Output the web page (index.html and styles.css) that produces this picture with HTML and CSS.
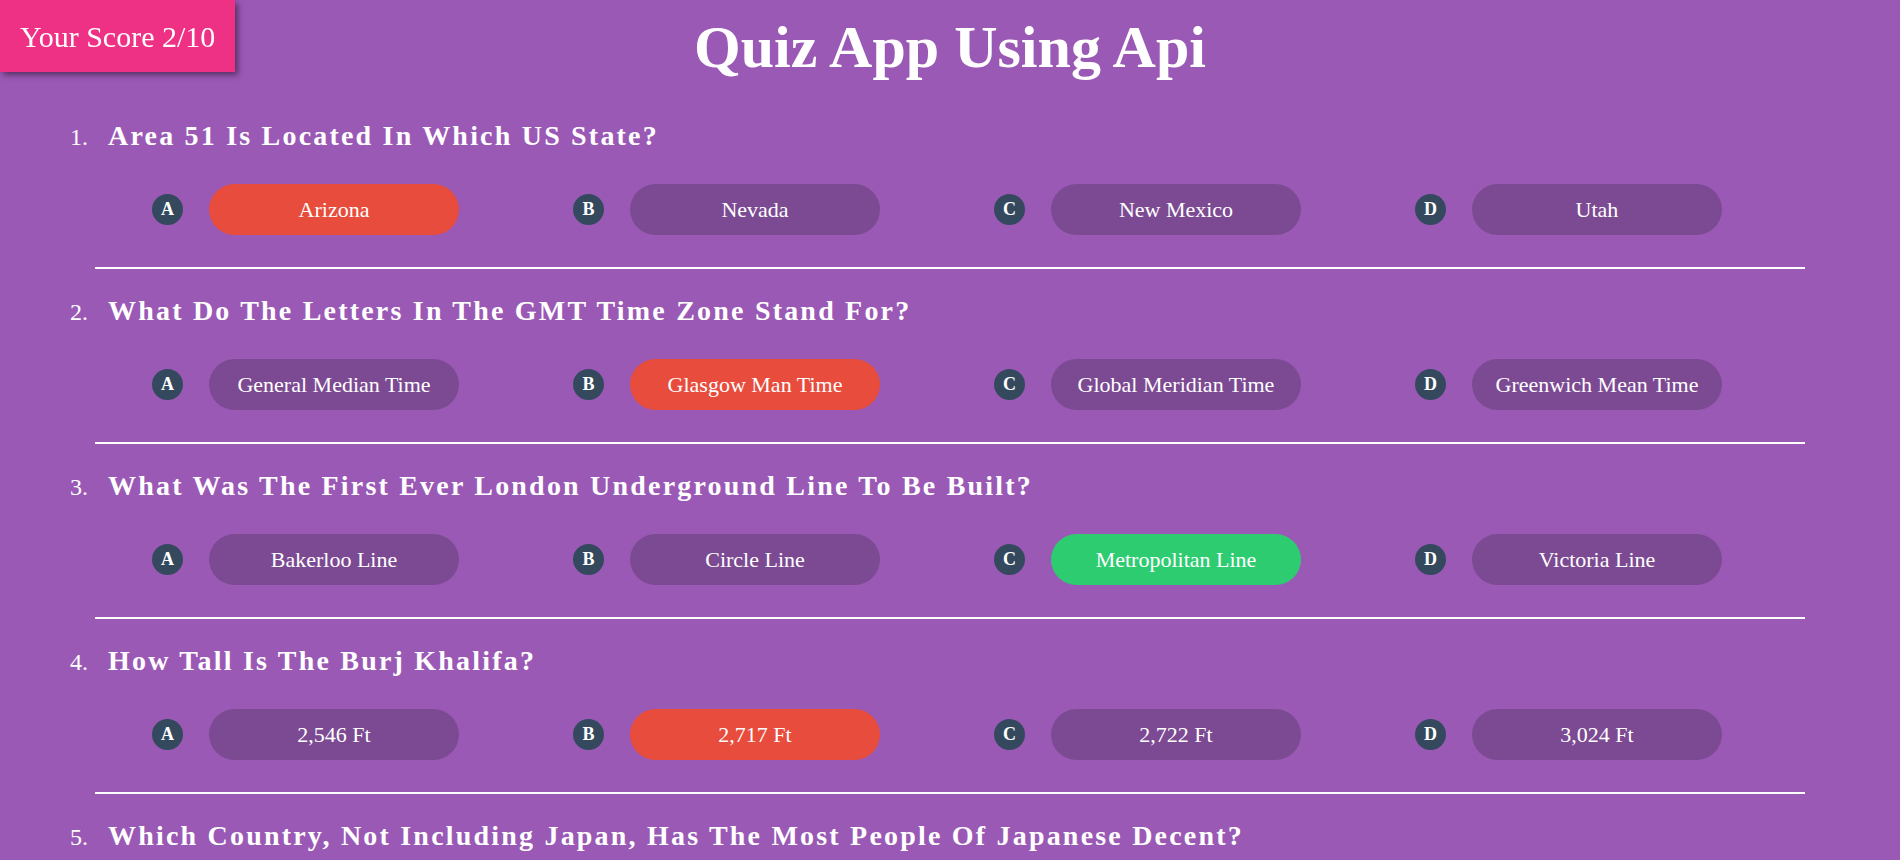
FILE: index.html
```html
<!DOCTYPE html>
<html lang="en">
<head>
<meta charset="utf-8">
<title>Quiz App Using Api</title>
<link rel="stylesheet" href="styles.css">
</head>
<body>
<div class="score">Your Score 2/10</div>
<h1 class="title">Quiz App Using Api</h1>
<main class="quiz">
  <section class="question">
    <div class="q-head"><span class="q-num">1.</span><h2 class="q-text">Area 51 Is Located In Which US State?</h2></div>
    <div class="options">
      <div class="option"><span class="letter">A</span><button class="answer wrong">Arizona</button></div>
      <div class="option"><span class="letter">B</span><button class="answer">Nevada</button></div>
      <div class="option"><span class="letter">C</span><button class="answer">New Mexico</button></div>
      <div class="option"><span class="letter">D</span><button class="answer">Utah</button></div>
    </div>
    <hr class="divider">
  </section>
  <section class="question">
    <div class="q-head"><span class="q-num">2.</span><h2 class="q-text">What Do The Letters In The GMT Time Zone Stand For?</h2></div>
    <div class="options">
      <div class="option"><span class="letter">A</span><button class="answer">General Median Time</button></div>
      <div class="option"><span class="letter">B</span><button class="answer wrong">Glasgow Man Time</button></div>
      <div class="option"><span class="letter">C</span><button class="answer">Global Meridian Time</button></div>
      <div class="option"><span class="letter">D</span><button class="answer">Greenwich Mean Time</button></div>
    </div>
    <hr class="divider">
  </section>
  <section class="question">
    <div class="q-head"><span class="q-num">3.</span><h2 class="q-text">What Was The First Ever London Underground Line To Be Built?</h2></div>
    <div class="options">
      <div class="option"><span class="letter">A</span><button class="answer">Bakerloo Line</button></div>
      <div class="option"><span class="letter">B</span><button class="answer">Circle Line</button></div>
      <div class="option"><span class="letter">C</span><button class="answer right">Metropolitan Line</button></div>
      <div class="option"><span class="letter">D</span><button class="answer">Victoria Line</button></div>
    </div>
    <hr class="divider">
  </section>
  <section class="question">
    <div class="q-head"><span class="q-num">4.</span><h2 class="q-text">How Tall Is The Burj Khalifa?</h2></div>
    <div class="options">
      <div class="option"><span class="letter">A</span><button class="answer">2,546 Ft</button></div>
      <div class="option"><span class="letter">B</span><button class="answer wrong">2,717 Ft</button></div>
      <div class="option"><span class="letter">C</span><button class="answer">2,722 Ft</button></div>
      <div class="option"><span class="letter">D</span><button class="answer">3,024 Ft</button></div>
    </div>
    <hr class="divider">
  </section>
  <section class="question">
    <div class="q-head"><span class="q-num">5.</span><h2 class="q-text">Which Country, Not Including Japan, Has The Most People Of Japanese Decent?</h2></div>
  </section>
</main>
</body>
</html>
```

FILE: styles.css
```css
html {
  scrollbar-width: none;
}

body {
  margin: 0;
  background: #9b59b6;
  color: #ffffff;
  font-family: "Liberation Serif", "Times New Roman", serif;
}

.score {
  position: fixed;
  top: 0;
  left: 0;
  z-index: 2;
  padding: 20px 20px 19px 20px;
  background: #ef3186;
  color: #ffffff;
  font-size: 30px;
  line-height: 33px;
  box-shadow: 3px 3px 6px rgba(0, 0, 0, 0.45);
}

.title {
  margin: 12px 0 0;
  font-size: 60px;
  line-height: 70px;
  font-weight: bold;
  text-align: center;
}

.quiz {
  padding-top: 35.5px;
}

.question {
  display: flex;
  flex-direction: column;
}

.q-head {
  display: flex;
  align-items: baseline;
  height: 36px;
  padding-left: 70px;
  gap: 20px;
}

.q-num {
  font-size: 24px;
  line-height: 36px;
}

.q-text {
  margin: 0;
  font-size: 28px;
  line-height: 36px;
  font-weight: bold;
  letter-spacing: 2.2px;
}

.options {
  display: flex;
  gap: 114px;
  margin: 30.5px 0 0 152px;
}

.option {
  display: flex;
  align-items: center;
  gap: 26px;
}

.letter {
  width: 31px;
  height: 31px;
  border-radius: 50%;
  background: #34495e;
  color: #ffffff;
  font-size: 18px;
  font-weight: bold;
  line-height: 31px;
  text-align: center;
}

.answer {
  width: 250px;
  height: 51px;
  padding: 0 10px;
  border: none;
  border-radius: 26px;
  background: #7c4a92;
  color: #ffffff;
  font-family: "Liberation Serif", "Times New Roman", serif;
  font-size: 22px;
  line-height: 51px;
  text-align: center;
  white-space: nowrap;
}

.answer.wrong {
  background: #e74c3c;
}

.answer.right {
  background: #2ecc71;
}

.divider {
  width: 90%;
  height: 2px;
  margin: 32px auto 23.5px;
  border: none;
  background: #ffffff;
}
```
